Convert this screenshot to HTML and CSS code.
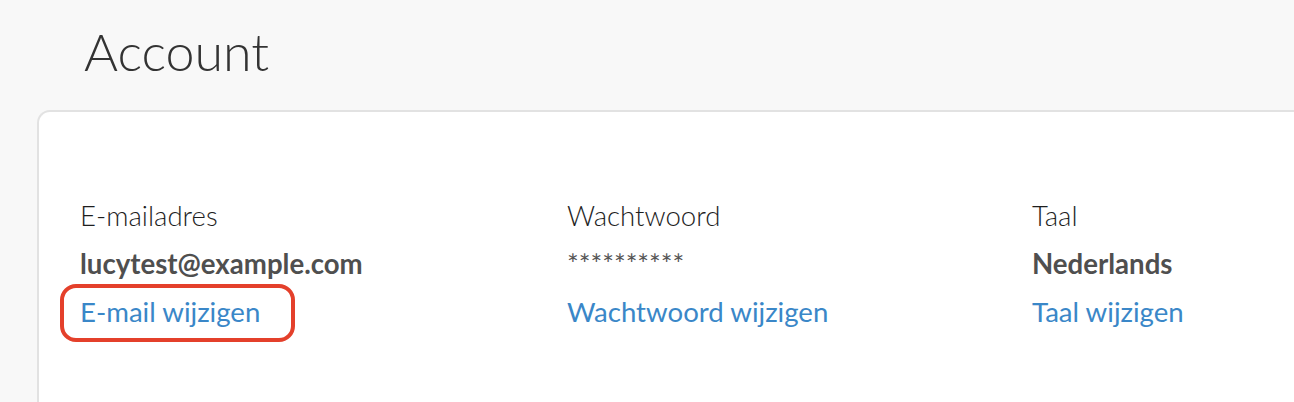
FILE: index.html
```html
<!DOCTYPE html>
<html lang="nl">
<head>
<meta charset="utf-8">
<title>Account</title>
<link rel="stylesheet" href="styles.css">
</head>
<body>
  <h1 class="page-title">Account</h1>
  <section class="card">
    <div class="settings">
      <div class="setting">
        <div class="setting-label">E-mailadres</div>
        <div class="setting-value">lucytest@example.com</div>
        <a class="setting-link highlighted" href="#">E-mail wijzigen</a>
      </div>
      <div class="setting">
        <div class="setting-label">Wachtwoord</div>
        <div class="setting-value masked">**********</div>
        <a class="setting-link" href="#">Wachtwoord wijzigen</a>
      </div>
      <div class="setting">
        <div class="setting-label">Taal</div>
        <div class="setting-value">Nederlands</div>
        <a class="setting-link" href="#">Taal wijzigen</a>
      </div>
    </div>
  </section>
</body>
</html>
```

FILE: styles.css
```css
html, body {
  margin: 0;
  padding: 0;
}
body {
  background: #f8f8f8;
  font-family: Lato, "Open Sans", sans-serif;
  overflow: hidden;
  height: 402px;
}
.page-title {
  margin: 0;
  padding: 19px 0 0 84px;
  font-size: 52px;
  font-weight: 300;
  line-height: 64px;
  color: #333333;
}
.card {
  margin: 27px 0 0 37px;
  width: calc(100% - 37px);
  height: 292px;
  background: #ffffff;
  border: 2px solid #e2e2e2;
  border-right: none;
  border-bottom: none;
  border-radius: 13px 0 0 0;
  padding: 80px 0 0 41px;
  box-sizing: border-box;
}
.settings {
  display: grid;
  grid-template-columns: 487px 465px 1fr;
}
.setting {
  display: flex;
  flex-direction: column;
  align-items: flex-start;
  font-size: 27.6px;
  line-height: 48px;
}
.setting-label {
  font-weight: 300;
  color: #1e1e1e;
}
.setting-value {
  font-weight: 700;
  color: #4f4f4f;
}
.setting-value.masked {
  font-weight: 400;
  color: #555555;
}
.setting-link {
  color: #3a87c8;
  text-decoration: none;
  font-weight: 400;
}
.highlighted {
  position: relative;
}
.highlighted::after {
  content: "";
  position: absolute;
  left: -20px;
  right: -35px;
  top: -4px;
  bottom: -6px;
  border: 4px solid #e4402b;
  border-radius: 16px;
}
```
